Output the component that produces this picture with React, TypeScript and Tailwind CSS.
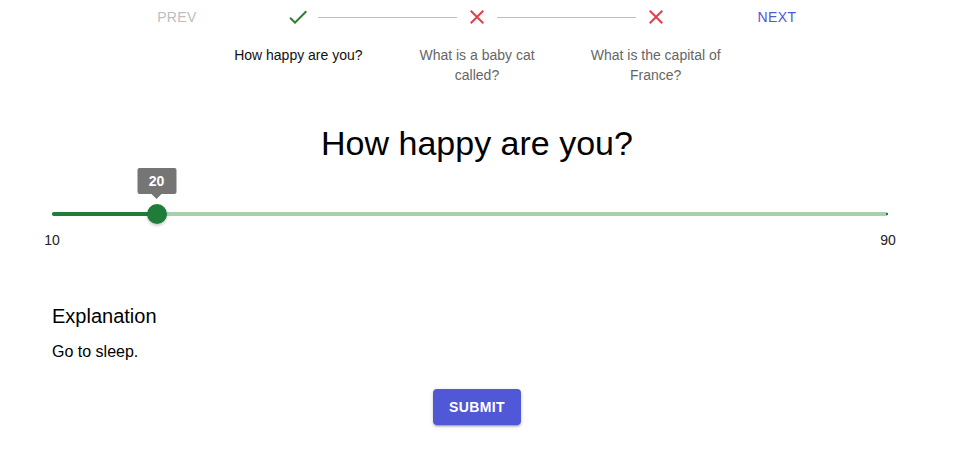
import React from 'react';

const steps = [
  { label: 'How happy are you?', ok: true, active: true },
  { label: 'What is a baby cat called?', ok: false, active: false },
  { label: 'What is the capital of France?', ok: false, active: false },
];

const CheckIcon = () => (
  <svg viewBox="0 0 24 24" className="w-6 h-6" fill="#2e7d32">
    <path d="M9 16.17 4.83 12l-1.42 1.41L9 19 21 7l-1.41-1.41z" />
  </svg>
);

const CloseIcon = () => (
  <svg viewBox="0 0 24 24" className="w-6 h-6" fill="#e0404a">
    <path d="M19 6.41 17.59 5 12 10.59 6.41 5 5 6.41 10.59 12 5 17.59 6.41 19 12 13.41 17.59 19 19 17.59 13.41 12z" />
  </svg>
);

export default function App() {
  const min = 10;
  const max = 90;
  const value = 20;
  const pct = ((value - min) / (max - min)) * 100;

  return (
    <div
      className="w-[954px] h-[451px] bg-white text-black"
      style={{ fontFamily: '"Liberation Sans", Arial, sans-serif' }}
    >
      {/* stepper */}
      <div className="flex justify-center pt-[5px]">
        <button className="w-16 h-[24px] text-[14px] tracking-[0.4px] text-[#bdbdbd] uppercase">
          Prev
        </button>
        <div className="flex w-[536px]">
          {steps.map((s, i) => (
            <div key={i} className="relative flex-1 flex flex-col items-center">
              {i > 0 && (
                <div className="absolute top-[12px] left-[calc(-50%+20px)] right-[calc(50%+20px)] border-t border-[#bdbdbd]" />
              )}
              {s.ok ? <CheckIcon /> : <CloseIcon />}
              <div
                className={`mt-[16px] text-[14px] leading-[20px] text-center px-2 ${
                  s.active ? 'text-[#111]' : 'text-[#666]'
                }`}
              >
                {s.label}
              </div>
            </div>
          ))}
        </div>
        <button className="w-16 h-[24px] text-[14px] tracking-[0.4px] text-[#4f57d8] uppercase">
          Next
        </button>
      </div>

      <h1 className="text-center text-[34px] leading-[40px] mt-[38px]">How happy are you?</h1>

      {/* slider */}
      <div className="ml-[52px] mr-[66px] mt-[25px]">
        <div className="relative h-[43px]">
          <div className="absolute left-0 right-0 top-[24px] h-[4px] rounded-full bg-[#a8cfb0]" />
          <div
            className="absolute left-0 top-[24px] h-[4px] rounded-full bg-[#1f7d39]"
            style={{ width: `${pct}%` }}
          />
          <div className="absolute right-0 top-[25px] w-[2px] h-[2px] bg-[#1f7d39]" />
          <div
            className="absolute top-[16px] w-5 h-5 -ml-[10px] rounded-full bg-[#1f7d39] shadow-[0_2px_3px_rgba(0,0,0,0.2)]"
            style={{ left: `${pct}%` }}
          />
          <div
            className="absolute top-[-20px] -translate-x-1/2 flex flex-col items-center"
            style={{ left: `${pct}%` }}
          >
            <div className="bg-[#757575] text-white text-[14px] font-bold leading-[26px] w-[39px] text-center rounded-[2px]">
              {value}
            </div>
            <div className="w-0 h-0 border-x-[5px] border-x-transparent border-t-[5px] border-t-[#757575]" />
          </div>
        </div>
        <div className="relative h-[20px] text-[14px] text-[#222]">
          <span className="absolute left-0 -translate-x-1/2 top-[-1px]">{min}</span>
          <span className="absolute right-0 translate-x-1/2 top-[-1px]">{max}</span>
        </div>
      </div>

      <div className="mx-[52px] mt-[49px]">
        <h2 className="text-[20px] leading-[32px]">Explanation</h2>
        <p className="text-[16px] leading-[24px] mt-[8px]">Go to sleep.</p>
      </div>

      <div className="flex justify-center mt-[25px]">
        <button className="h-[36px] px-4 rounded-[4px] bg-[#5058d8] text-white text-[14px] font-bold tracking-[0.4px] uppercase shadow-[0_3px_1px_-2px_rgba(0,0,0,0.2),0_2px_2px_0_rgba(0,0,0,0.14),0_1px_5px_0_rgba(0,0,0,0.12)]">
          Submit
        </button>
      </div>
    </div>
  );
}
